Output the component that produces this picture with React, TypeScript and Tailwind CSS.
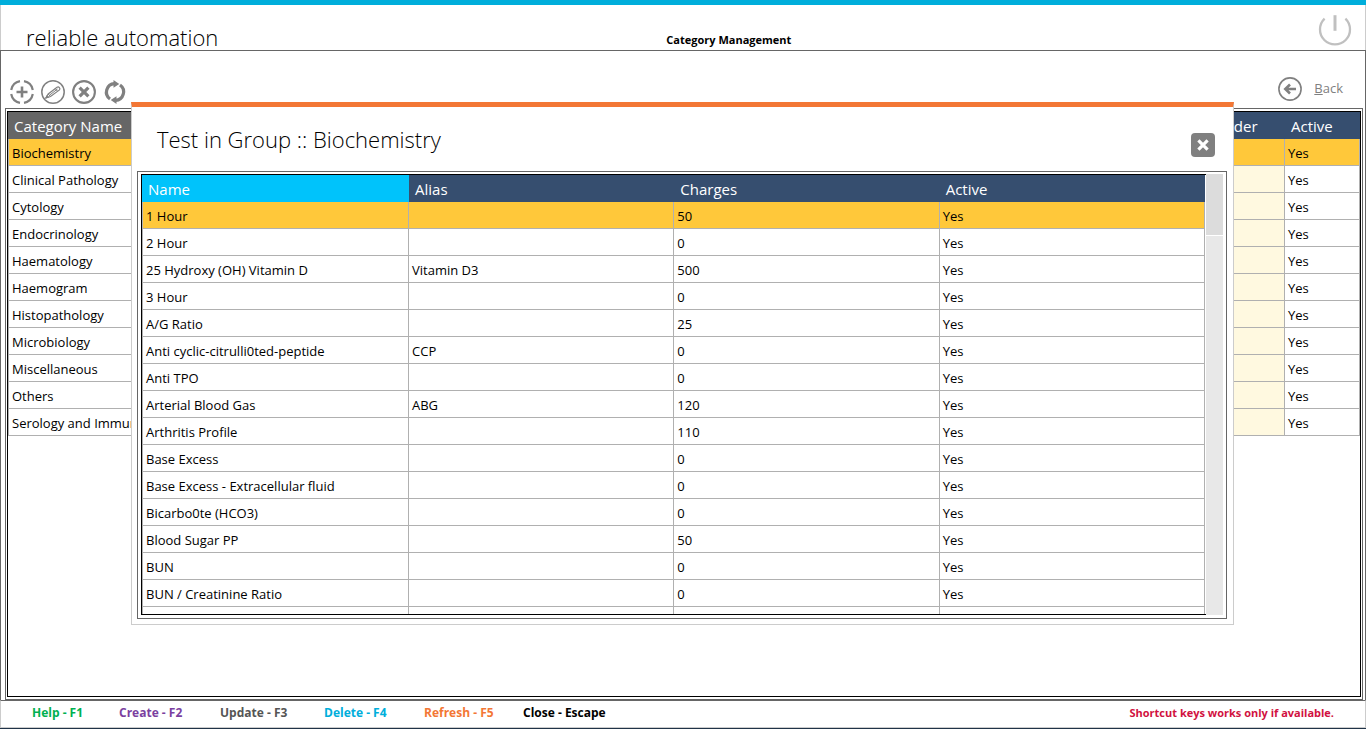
const CATEGORIES = [
  "Biochemistry",
  "Clinical Pathology",
  "Cytology",
  "Endocrinology",
  "Haematology",
  "Haemogram",
  "Histopathology",
  "Microbiology",
  "Miscellaneous",
  "Others",
  "Serology and Immunology",
];

interface Test {
  name: string;
  alias?: string;
  charges: number;
}

const TESTS: Test[] = [
  { name: "1 Hour", charges: 50 },
  { name: "2 Hour", charges: 0 },
  { name: "25 Hydroxy (OH) Vitamin D", alias: "Vitamin D3", charges: 500 },
  { name: "3 Hour", charges: 0 },
  { name: "A/G Ratio", charges: 25 },
  { name: "Anti cyclic-citrulli0ted-peptide", alias: "CCP", charges: 0 },
  { name: "Anti TPO", charges: 0 },
  { name: "Arterial Blood Gas", alias: "ABG", charges: 120 },
  { name: "Arthritis Profile", charges: 110 },
  { name: "Base Excess", charges: 0 },
  { name: "Base Excess - Extracellular fluid", charges: 0 },
  { name: "Bicarbo0te (HCO3)", charges: 0 },
  { name: "Blood Sugar PP", charges: 50 },
  { name: "BUN", charges: 0 },
  { name: "BUN / Creatinine Ratio", charges: 0 },
];

const SHORTCUTS = [
  { label: "Help - F1", style: "w-[87px] text-[#00b050]" },
  { label: "Create - F2", style: "w-[101px] text-[#7b3fa0]" },
  { label: "Update - F3", style: "w-[104px] text-[#555555]" },
  { label: "Delete - F4", style: "w-[100px] text-[#00aedb]" },
  { label: "Refresh - F5", style: "w-[99px] text-[#f37735]" },
  { label: "Close - Escape", style: "text-black" },
];

export default function App() {
  return (
    <div className="relative flex min-h-screen flex-col border-b border-[#1f3348] bg-white font-['Open_Sans','Noto_Sans',sans-serif] text-[13px] text-black">
      <Header />
      <main className="flex flex-1 flex-col border border-b-0 border-[#666666] pr-0.5 pl-1">
        <Toolbar />
        <div className="flex flex-1 flex-col border border-[#666666] px-px pt-0.5 pb-0.5">
          <div className="flex-1 border border-black">
            <CategoryTable />
          </div>
        </div>
      </main>
      <Footer />
      <TestDialog />
    </div>
  );
}

function Header() {
  return (
    <header className="h-[50px] border-t-[5px] border-[#00aedb]">
      <div className="grid h-full grid-cols-[5fr_5fr_4fr] border-x border-[#cccccc] px-3">
        <h1 className="pt-4 pl-[13px] text-[22px] leading-8 font-light">reliable automation</h1>
        <h2 className="pt-[25px] pr-1 text-center text-[11px] leading-5 font-bold">Category Management</h2>
        <button type="button" aria-label="Exit" className="mt-1.5 size-9 justify-self-end">
          <PowerIcon />
        </button>
      </div>
    </header>
  );
}

function Toolbar() {
  return (
    <div className="flex h-[57px] items-end justify-between pr-5 pb-1 pl-[5px] text-[#808080]">
      <div className="flex gap-[7px]">
        <button type="button" aria-label="Create"><AddIcon /></button>
        <button type="button" aria-label="Update"><EditIcon /></button>
        <button type="button" aria-label="Delete"><DeleteIcon /></button>
        <button type="button" aria-label="Refresh"><RefreshIcon /></button>
      </div>
      <a href="#back" className="mb-[3px] flex items-center gap-3">
        <BackIcon />
        <span><span className="underline">B</span>ack</span>
      </a>
    </div>
  );
}

function CategoryTable() {
  return (
    <table className="w-full table-fixed border-separate border-spacing-0 text-left">
      <thead>
        <tr className="h-[27px] bg-[#364e6f] text-[15px] leading-5 text-white">
          <th className="w-[123px] overflow-hidden bg-[#666666] px-[6px] font-normal whitespace-nowrap">Category Name</th>
          <th />
          <th className="w-[75px] px-[6px] font-normal">Order</th>
          <th className="w-[75px] px-[6px] font-normal">Active</th>
        </tr>
      </thead>
      <tbody>
        {CATEGORIES.map((name, i) => (
          <tr key={name} className={`h-[27px] leading-5 ${i === 0 ? "bg-[#ffc83a]" : ""}`}>
            <td className="overflow-hidden border-b border-l border-[#b0b0b0] pt-0.5 pl-[3px] whitespace-nowrap">{name}</td>
            <td className="border-r border-b border-[#b0b0b0]" />
            <td className={`border-r border-b border-[#b0b0b0] px-[3px] ${i === 0 ? "" : "bg-[#fff9e0]"}`} />
            <td className="border-r border-b border-[#b0b0b0] px-[3px] pt-0.5">Yes</td>
          </tr>
        ))}
      </tbody>
    </table>
  );
}

function TestDialog() {
  return (
    <div
      role="dialog"
      aria-labelledby="dialog-title"
      className="absolute top-[102px] right-[132px] left-[131px] border border-t-[5px] border-[#cccccc] border-t-[#f37735] bg-white pr-[6px] pb-[5px] pl-[5px]"
    >
      <div className="flex h-16 justify-between pr-3 pl-5">
        <h2 id="dialog-title" className="pt-4 text-[22px] leading-8 font-light">
          Test in Group :: Biochemistry
        </h2>
        <button type="button" aria-label="Close" className="mt-[26px] size-6">
          <CloseIcon />
        </button>
      </div>
      <div className="flex border border-[#666666] px-[3px] pt-0.5 pb-[3px]">
        <div className="h-[441px] flex-1 overflow-hidden border border-r-0 border-black pr-px">
          <table className="w-full table-fixed border-separate border-spacing-0 text-left">
            <thead>
              <tr className="h-[27px] bg-[#364e6f] text-[15px] leading-5 text-white">
                <th className="w-[267px] bg-[#00c3fb] px-[6px] font-normal">Name</th>
                <th className="px-[6px] font-normal">Alias</th>
                <th className="px-[6px] font-normal">Charges</th>
                <th className="px-[6px] font-normal">Active</th>
              </tr>
            </thead>
            <tbody>
              {TESTS.map((test, i) => (
                <tr key={test.name} className={`h-[27px] leading-5 ${i === 0 ? "bg-[#ffc83a]" : ""}`}>
                  <td className="border-r border-b border-l border-[#b0b0b0] px-[3px] pt-0.5">{test.name}</td>
                  <td className="border-r border-b border-[#b0b0b0] px-[3px] pt-0.5">{test.alias}</td>
                  <td className="border-r border-b border-[#b0b0b0] px-[3px] pt-0.5">{test.charges}</td>
                  <td className="border-r border-b border-[#b0b0b0] px-[3px] pt-0.5">Yes</td>
                </tr>
              ))}
              <tr className="h-[27px]">
                <td className="border-r border-l border-[#b0b0b0]" />
                <td className="border-r border-[#b0b0b0]" />
                <td className="border-r border-[#b0b0b0]" />
                <td className="border-r border-[#b0b0b0]" />
              </tr>
            </tbody>
          </table>
        </div>
        {/* scroll track and thumb */}
        <div className="w-[17px] bg-[#e8e8e8]">
          <div className="h-[62px] border-b border-white bg-[#dcdcdc]" />
        </div>
      </div>
    </div>
  );
}

function Footer() {
  return (
    <footer className="flex h-7 justify-between border border-[#cccccc] border-t-[#666666] px-[31px] leading-6 font-bold">
      <div className="flex text-xs leading-6">
        {SHORTCUTS.map(({ label, style }) => (
          <span key={label} className={style}>{label}</span>
        ))}
      </div>
      <span className="text-[11px] text-[#d11141]">Shortcut keys works only if available.</span>
    </footer>
  );
}

function PowerIcon() {
  return (
    <svg viewBox="0 0 36 36" className="size-9" fill="none" stroke="#c0c0c0" strokeWidth="2.3">
      <path d="M7.6 7.6a15 15 0 1 0 20.8 0" />
      <path d="M18 4.2v15.6" strokeWidth="3" />
    </svg>
  );
}

function AddIcon() {
  return (
    <svg viewBox="0 0 24 24" className="size-6" fill="none" stroke="currentColor">
      <path
        strokeWidth="2.2"
        d="M1.2 10A11 11 0 0 1 10 1.2M14 1.2a11 11 0 0 1 8.8 8.8M22.8 14a11 11 0 0 1-8.8 8.8M10 22.8a11 11 0 0 1-8.8-8.8"
      />
      <path strokeWidth="2.6" d="M12 6.5v11M6.5 12h11" />
    </svg>
  );
}

function EditIcon() {
  return (
    <svg viewBox="0 0 24 24" className="size-6" fill="none" stroke="currentColor">
      <circle cx="12" cy="12" r="11.2" strokeWidth="1.5" />
      <path d="M4.8 18l2.4-4L16 7.2q1.4-.8 2.4.4t.1 2.3l-9 6.6z" strokeWidth="1.2" />
      <path d="M7.2 14l2.3 2.5M8.5 15.2l8-6.2M14.3 8.6l2.2 2.6" strokeWidth="1" />
      <path d="M4.8 18l1.3-2.4 1.5 1.6z" fill="currentColor" />
    </svg>
  );
}

function DeleteIcon() {
  return (
    <svg viewBox="0 0 24 24" className="size-6" fill="none" stroke="currentColor">
      <circle cx="12" cy="12" r="10.9" strokeWidth="2.1" />
      <path d="M7.6 7.6l8.8 8.8M16.4 7.6l-8.8 8.8" strokeWidth="3.2" />
    </svg>
  );
}

function RefreshIcon() {
  return (
    <svg viewBox="0 0 24 24" className="size-6" fill="none" stroke="currentColor" strokeWidth="3.2">
      <path d="M7 19A8.5 8.5 0 0 1 11.5 3.6M17 5A8.5 8.5 0 0 1 12.5 20.4" />
      <path d="M10.5 0l5.8 3.9-5.8 3.8zM13.5 24l-5.8-3.9 5.8-3.8z" fill="currentColor" stroke="none" />
    </svg>
  );
}

function BackIcon() {
  return (
    <svg viewBox="0 0 24 24" className="size-6" fill="none" stroke="currentColor">
      <circle cx="12" cy="12" r="11.1" strokeWidth="1.6" />
      <path d="M18 12H8M12 7.5L7.3 12l4.7 4.5" strokeWidth="2.6" />
    </svg>
  );
}

function CloseIcon() {
  return (
    <svg viewBox="0 0 24 24" className="size-6" fill="none">
      <rect width="24" height="24" rx="4" fill="#808080" />
      <path d="M7.4 7.4l9.2 9.2M16.6 7.4l-9.2 9.2" stroke="#fff" strokeWidth="3.2" />
    </svg>
  );
}
